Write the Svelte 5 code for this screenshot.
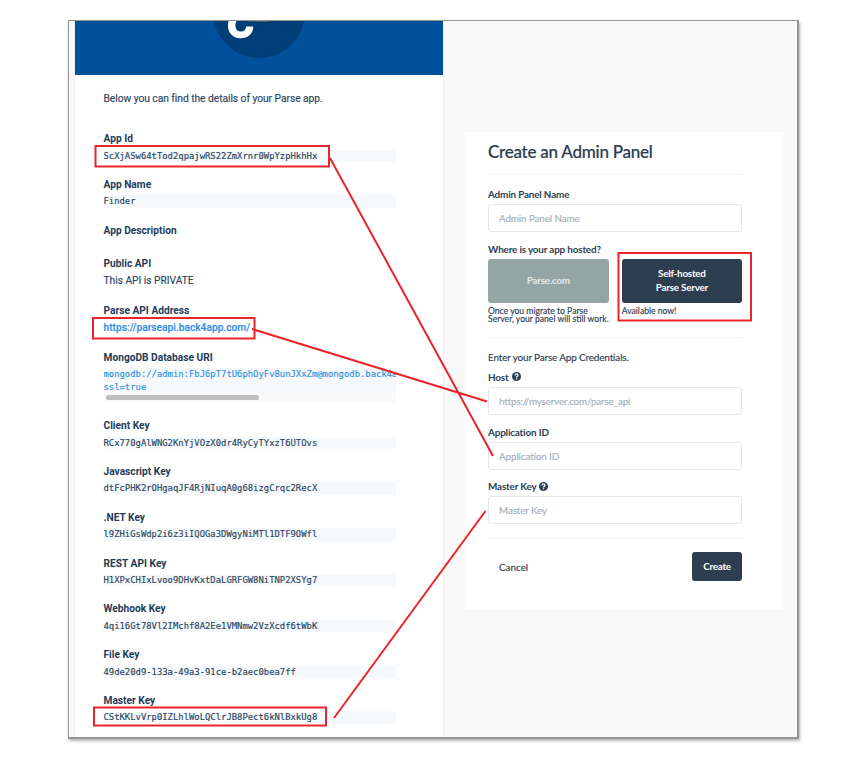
<script>
  const fields = [
    { label: 'App Id', value: 'ScXjASw64tTod2qpajwRS22ZmXrnr0WpYzpHkhHx', kind: 'code' },
    { label: 'App Name', value: 'Finder', kind: 'code' },
    { label: 'App Description', kind: 'empty' },
    { label: 'Public API', value: 'This API is PRIVATE', kind: 'plain' },
    { label: 'Parse API Address', value: 'https://parseapi.back4app.com/', kind: 'link' },
    { label: 'MongoDB Database URI', kind: 'uri' },
    { label: 'Client Key', value: 'RCx770gAlWNG2KnYjVOzX0dr4RyCyTYxzT6UTOvs', kind: 'code' },
    { label: 'Javascript Key', value: 'dtFcPHK2rOHgaqJF4RjNIuqA0g68izgCrqc2RecX', kind: 'code' },
    { label: '.NET Key', value: 'l9ZHiGsWdp2i6z3iIQOGa3DWgyNiMTl1DTF9OWfl', kind: 'code' },
    { label: 'REST API Key', value: 'H1XPxCHIxLvoo9DHvKxtDaLGRFGW8NiTNP2XSYg7', kind: 'code' },
    { label: 'Webhook Key', value: '4qi16Gt78Vl2IMchf8A2Ee1VMNmw2VzXcdf6tWbK', kind: 'code' },
    { label: 'File Key', value: '49de20d9-133a-49a3-91ce-b2aec0bea7ff', kind: 'code' },
    { label: 'Master Key', value: 'CStKKLvVrp0IZLhlWoLQClrJB8Pect6kNlBxkUg8', kind: 'code' }
  ];
</script>

{#snippet help()}
  <svg class="help" viewBox="0 0 16 16"><circle cx="8" cy="8" r="8" fill="#2c3e50" /><path d="M5.200 6.200C5.400 4.400 6.600 3.500 8 3.500c1.600 0 2.700.9 2.700 2.300 0 1.800-2.600 1.800-2.600 4" fill="none" stroke="#fff" stroke-width="2.200" /><rect x="7" y="11" width="2.200" height="2.200" fill="#fff" /></svg>
{/snippet}

<div class="page">
  <div class="frame">
    <section class="details">
      <header>
        <svg width="368" height="53" viewBox="75 21 368 53">
          <circle cx="259" cy="12" r="46" fill="#003e78" />
          <path d="M228.500 21H236.500C234.200 25 235.500 31.500 240.500 31.500C244 31.500 246 29.500 246 26.500H253.300C253.300 33.500 248 38.300 240.800 38.300C231.500 38.300 226 30.500 228.500 21Z" fill="#fff" />
          <path d="M247 21h25q-3 1-7 1l-14-.2z" fill="#4a5a68" />
        </svg>
      </header>
      <div class="body">
        <p class="intro">Below you can find the details of your Parse app.</p>
        {#each fields as f}
          <div class="field {f.kind}">
            <div class="label">{f.label}</div>
            {#if f.kind === 'uri'}
              <div class="uri-box">
                <div class="uri-line">mongodb://admin:FbJ6pT7tU6phOyFv8unJXxZm@mongodb.back4a</div>
                <div class="uri-line">ssl=true</div>
                <div class="track"><div class="thumb"></div></div>
              </div>
            {:else if f.value}
              <div class="value">{f.value}</div>
            {/if}
          </div>
        {/each}
      </div>
    </section>

    <section class="card">
      <h1>Create an Admin Panel</h1>
      <label for="name">Admin Panel Name</label>
      <div class="input" id="name">Admin Panel Name</div>
      <label for="host-choice" class="gap">Where is your app hosted?</label>
      <div class="choices" id="host-choice">
        <div class="choice">
          <button class="muted">Parse.com</button>
          <small>Once you migrate to Parse<br />Server, your panel will still work.</small>
        </div>
        <div class="choice">
          <button>Self-hosted<br />Parse Server</button>
          <small>Available now!</small>
        </div>
      </div>
      <div class="rule"></div>
      <p class="cred">Enter your Parse App Credentials.</p>
      <label for="host">Host {@render help()}</label>
      <div class="input url" id="host">https://myserver.com/parse_api</div>
      <label for="app" class="gap">Application ID</label>
      <div class="input" id="app">Application ID</div>
      <label for="key" class="gap">Master Key {@render help()}</label>
      <div class="input" id="key">Master Key</div>
      <footer>
        <span>Cancel</span>
        <button>Create</button>
      </footer>
    </section>
  </div>

  <svg class="marks" width="854" height="773" viewBox="0 0 854 773">
    <g fill="none" stroke="#e9242a" stroke-width="2">
      <rect x="95.500" y="146" width="233.500" height="20.500" />
      <rect x="93" y="318" width="161.500" height="20.500" />
      <rect x="94" y="707.500" width="232" height="18" />
      <rect x="618.500" y="253" width="132.500" height="67.500" />
      <path d="M330 158L493 456M252 329L487 401.500M334 718L485.500 511" />
    </g>
  </svg>
</div>

<style>
  :global(body) { margin: 0; background: #fff; }
  .page { position: relative; width: 854px; height: 773px; overflow: hidden; box-sizing: border-box; padding: 20px 0 0 68px; background: #fff; }
  .frame { width: 731px; height: 719px; box-sizing: border-box; border: 1px solid #96948f; border-right-width: 2px; border-bottom-width: 2px; background: #f9f9f9; box-shadow: 1px 2px 3px rgba(0, 0, 0, .3); display: flex; align-items: flex-start; padding-left: 6px; overflow: hidden; }
  .details { width: 368px; height: 716px; flex: none; background: #fff; box-shadow: 0 0 1px 1px #efefef; font-family: Roboto, sans-serif; color: #2b4560; }
  header { height: 54px; background: #00509b; }
  header svg { display: block; }
  .body { padding-left: 28.500px; }
  .intro { margin: 0; padding-top: 17px; height: 38.200px; line-height: 14px; font-size: 10.300px; letter-spacing: -.06px; white-space: nowrap; -webkit-text-stroke: .15px currentColor; }
  .field { height: 45.800px; width: 292px; }
  .empty { height: 33px; }
  .plain, .link { height: 47px; }
  .uri { height: 68.400px; }
  .label { height: 19.500px; line-height: 18px; font-size: 10.200px; font-weight: 700; color: #1f3c5a; white-space: nowrap; }
  .value, .uri-line { height: 12.500px; line-height: 12.500px; font-family: "DejaVu Sans Mono", monospace; font-size: 8.880px; white-space: nowrap; -webkit-text-stroke: .15px currentColor; }
  .value { background: #f6f9fb; }
  .plain .value, .link .value { background: none; font: 10.200px/13px Roboto, sans-serif; }
  .link .value { color: #2f8fe8; font-weight: 500; letter-spacing: .01px; }
  .uri-box { background: #f6f9fb; overflow: hidden; }
  .uri-line { color: #2f92df; }
  .track { height: 9px; background: #fafafa; padding-top: 2px; box-sizing: border-box; }
  .thumb { margin-left: 2px; width: 153px; height: 5px; border-radius: 3px; background: #bebebe; }

  .card { margin: 111px 0 0 22px; width: 318px; height: 477px; box-sizing: border-box; padding: 0 41px 0 23px; background: #fff; font-family: Lato, sans-serif; color: #2c3e50; }
  h1 { margin: 0 0 12px; height: 43px; line-height: 40px; box-sizing: border-box; font-size: 17px; letter-spacing: -.24px; font-weight: 500; border-bottom: 1px solid #f2f2f2; white-space: nowrap; -webkit-text-stroke: .2px currentColor; }
  label { display: flex; align-items: center; gap: 3px; height: 14px; font-size: 9.900px; letter-spacing: -.16px; font-weight: 700; margin-bottom: 3px; white-space: nowrap; }
  .input { height: 28px; box-sizing: border-box; border: 1.500px solid #e5e7ec; border-radius: 3px; padding-left: 10px; line-height: 27px; font-size: 9.900px; letter-spacing: -.12px; color: #a5afb7; white-space: nowrap; -webkit-text-stroke: .15px currentColor; }
  .url { letter-spacing: -.17px; }
  .gap { margin-top: 9.700px; }
  .help { width: 9px; height: 9px; }
  .choices { display: flex; gap: 13px; }
  .choice { flex: 1; height: 78.300px; }
  button { display: block; width: 100%; height: 44px; padding: 0; border: 0; border-radius: 3px; background: #2c3e50; color: #fff; font: 700 9.900px/13.500px Lato, sans-serif; letter-spacing: -.24px; }
  .muted { background: #95a5a4; color: #e5eaea; }
  small { display: block; margin-top: 4px; font-size: 8.600px; line-height: 8px; white-space: nowrap; -webkit-text-stroke: .15px currentColor; }
  .rule { height: 1px; background: #f2f2f2; }
  .cred { margin: 12px 0 6px; height: 14px; line-height: 14px; font-size: 9.900px; letter-spacing: -.12px; -webkit-text-stroke: .15px currentColor; }
  footer { margin-top: 13.800px; border-top: 1px solid #f2f2f2; padding-top: 13px; display: flex; justify-content: space-between; align-items: center; font-size: 9.900px; padding-left: 11px; }
  footer span { -webkit-text-stroke: .15px currentColor; }
  footer button { width: 50px; height: 29px; }
  .marks { position: absolute; left: 0; top: 0; }
</style>
